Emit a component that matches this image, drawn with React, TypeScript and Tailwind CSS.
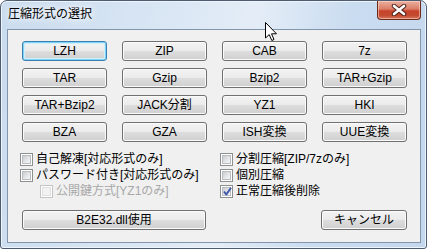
import type { ReactNode } from "react";

const FONT = "font-['Liberation_Sans','Noto_Sans_CJK_JP',sans-serif]";

function WinButton({ children, isDefault = false, className = "" }: { children: ReactNode; isDefault?: boolean; className?: string }) {
  return (
    <div
      className={`flex h-[20px] items-center justify-center rounded-[3px] border text-[12px] leading-none text-black bg-[linear-gradient(#f3f3f3_0%,#ebebeb_48%,#dddddd_52%,#cfcfcf_100%)] ${
        isDefault ? "border-[#3c7fb1] shadow-[inset_0_0_0_1px_#7fd3f5,inset_0_0_0_2px_#cdeefa]" : "border-[#707070] shadow-[inset_0_0_0_1px_#fbfbfb]"
      } ${className}`}
    >
      {children}
    </div>
  );
}

function CheckBox({ label, checked = false, disabled = false, className = "" }: { label: string; checked?: boolean; disabled?: boolean; className?: string }) {
  return (
    <div className={`flex h-[16px] items-center gap-[3px] ${className}`}>
      <div
        className={`relative flex h-[13px] w-[13px] shrink-0 items-center justify-center border bg-white ${
          disabled ? "border-[#c4c4c4]" : "border-[#8e8f8f]"
        }`}
      >
        <div
          className={`h-[9px] w-[9px] ${
            disabled ? "bg-[#f2f2f2] border border-[#e0e0e0]" : "bg-[linear-gradient(135deg,#c9ccd1_0%,#e4e6e8_55%,#f5f5f5_100%)] border border-[#b9bcc1]"
          }`}
        />
        {checked ? (
          <svg className="absolute left-[1px] top-[0px]" width="11" height="11" viewBox="0 0 11 11">
            <path d="M2 5.5 L4.3 8.5 L9 1.8" fill="none" stroke="#3d58a8" strokeWidth="2" strokeLinejoin="round" />
          </svg>
        ) : null}
      </div>
      <span className={`whitespace-nowrap text-[12px] leading-none ${disabled ? "text-[#a8a8a8]" : "text-black"}`}>{label}</span>
    </div>
  );
}

const formats = [
  "LZH", "ZIP", "CAB", "7z",
  "TAR", "Gzip", "Bzip2", "TAR+Gzip",
  "TAR+Bzip2", "JACK分割", "YZ1", "HKI",
  "BZA", "GZA", "ISH変換", "UUE変換",
];

export default function App() {
  return (
    <div className={`relative h-[249px] w-[427px] overflow-hidden bg-white ${FONT}`}>
      <div className="flex h-full w-full flex-col rounded-t-[7px] rounded-b-[3px] border border-[#4d5c70] bg-[linear-gradient(100deg,#c9dbee_0%,#d9e6f4_35%,#e4edf7_55%,#cadcf0_75%,#c3d7ed_100%)] shadow-[inset_0_0_0_1px_#eef4fb]">
        {/* title bar */}
        <div className="flex h-[28px] shrink-0 items-start justify-between">
          <span className="pl-[7px] pt-[7px] text-[12px] leading-none text-black [text-shadow:0_0_6px_#ffffff,0_0_10px_#ffffff]">
            圧縮形式の選択
          </span>
          <div className="mr-[5px] flex h-[19px] w-[44px] items-center justify-center rounded-b-[4px] border border-t-0 border-[#6a2a1c] bg-[linear-gradient(#eab0a0_0%,#dc7d66_45%,#c7432a_55%,#c24a30_80%,#d9775c_100%)] shadow-[inset_0_0_0_1px_rgba(255,220,210,0.55)]">
            <svg width="16" height="12" viewBox="0 0 16 12">
              <path d="M3 2 L13 10 M13 2 L3 10" stroke="#4a2018" strokeWidth="4.5" strokeLinecap="round" />
              <path d="M3 2 L13 10 M13 2 L3 10" stroke="#ffffff" strokeWidth="2.6" strokeLinecap="round" />
            </svg>
          </div>
        </div>

        {/* client area */}
        <div className="ml-[6px] h-[214px] w-[414px] border border-[#8394ad] bg-[#f0f0f0]">
          <div className="grid grid-cols-[repeat(4,85px)] gap-x-[15px] gap-y-[7px] pl-[14px] pt-[11px]">
            {formats.map((name, i) => (
              <WinButton key={name} isDefault={i === 0}>
                {name}
              </WinButton>
            ))}
          </div>

          <div className="mt-[9px] flex pl-[12px]">
            <div className="flex w-[200px] flex-col">
              <CheckBox label="自己解凍[対応形式のみ]" />
              <CheckBox label="パスワード付き[対応形式のみ]" />
              <CheckBox label="公開鍵方式[YZ1のみ]" disabled className="pl-[20px]" />
            </div>
            <div className="flex flex-col">
              <CheckBox label="分割圧縮[ZIP/7zのみ]" />
              <CheckBox label="個別圧縮" />
              <CheckBox label="正常圧縮後削除" checked />
            </div>
          </div>

          <div className="mt-[11px] flex items-center pl-[14px]">
            <WinButton className="w-[184px]">B2E32.dll使用</WinButton>
            <WinButton className="ml-[115px] w-[86px]">キャンセル</WinButton>
          </div>
        </div>
      </div>

      {/* mouse cursor */}
      <svg className="absolute left-[265px] top-[22px]" width="13" height="20" viewBox="0 0 13 20">
        <path d="M0.5 0.5 L0.5 16 L4.2 12.6 L6.8 18.5 L9 17.5 L6.5 11.8 L11.5 11.8 Z" fill="#ffffff" stroke="#000000" strokeWidth="1" strokeLinejoin="miter" />
      </svg>
    </div>
  );
}
